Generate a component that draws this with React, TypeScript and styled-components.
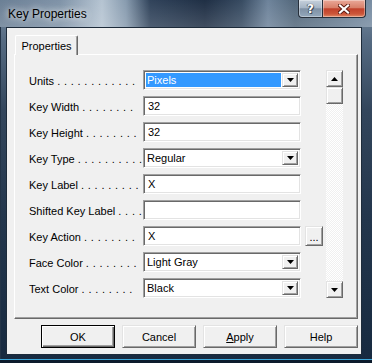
import React from "react";
import styled, { createGlobalStyle, css } from "styled-components";

const GlobalStyle = createGlobalStyle`
  html, body {
    margin: 0;
    padding: 0;
    background: #ffffff;
  }
  body {
    font-family: "Liberation Sans", Arial, sans-serif;
    color: #000;
  }
`;

type Field = {
  label: string;
  dots: number;
  kind: "edit" | "combo";
  value: string;
  focused?: boolean;
  browse?: boolean;
};

const fields: Field[] = [
  { label: "Units", dots: 12, kind: "combo", value: "Pixels", focused: true },
  { label: "Key Width", dots: 8, kind: "edit", value: "32" },
  { label: "Key Height", dots: 8, kind: "edit", value: "32" },
  { label: "Key Type", dots: 10, kind: "combo", value: "Regular" },
  { label: "Key Label", dots: 9, kind: "edit", value: "X" },
  { label: "Shifted Key Label", dots: 4, kind: "edit", value: "" },
  { label: "Key Action", dots: 8, kind: "edit", value: "X", browse: true },
  { label: "Face Color", dots: 8, kind: "combo", value: "Light Gray" },
  { label: "Text Color", dots: 8, kind: "combo", value: "Black" },
];

const raised = css`
  box-sizing: border-box;
  border: 1px solid;
  border-color: #e3e3e3 #696969 #696969 #e3e3e3;
  box-shadow: inset 1px 1px 0 #ffffff, inset -1px -1px 0 #a0a0a0;
  background: #f0f0f0;
`;

const sunken = css`
  box-sizing: border-box;
  border: 1px solid;
  border-color: #a0a0a0 #ffffff #ffffff #a0a0a0;
  box-shadow: inset 1px 1px 0 #696969, inset -1px -1px 0 #e3e3e3;
  background: #ffffff;
`;

const Arrow = ({ up }: { up?: boolean }) => (
  <svg width="7" height="4" viewBox="0 0 7 4">
    <polygon points={up ? "3.5,0 7,4 0,4" : "0,0 7,0 3.5,4"} fill="#000" />
  </svg>
);

const CloseGlyph = () => (
  <svg width="12" height="10" viewBox="0 0 12 10">
    <path d="M2 1.5 L10 8.5 M10 1.5 L2 8.5" stroke="#5a1a10" strokeWidth="4" strokeLinecap="square" />
    <path d="M2 1.5 L10 8.5 M10 1.5 L2 8.5" stroke="#ffffff" strokeWidth="2.2" strokeLinecap="square" />
  </svg>
);

const App = () => {
  return (
    <>
      <GlobalStyle />
      <Window>
        <TitleBar>
          <Title>Key Properties</Title>
          <Captions>
            <Caption $variant="help">
              <HelpMark>?</HelpMark>
            </Caption>
            <Caption $variant="close">
              <CloseGlyph />
            </Caption>
          </Captions>
        </TitleBar>
        <Client>
          <Sheet>
            <TabStrip>
              <Tab>Properties</Tab>
            </TabStrip>
            <Panel>
              <ScrollArea>
                <Form>
                  {fields.map((f) => (
                    <Row key={f.label}>
                      <Label>
                        {f.label} <Leader>{Array(f.dots).fill(".").join(" ")}</Leader>
                      </Label>
                      {f.kind === "edit" ? (
                        <Edit>{f.value}</Edit>
                      ) : (
                        <Combo>
                          <ComboValue $focused={f.focused}>{f.value}</ComboValue>
                          <DropButton>
                            <Arrow />
                          </DropButton>
                        </Combo>
                      )}
                      {f.browse && <BrowseButton>...</BrowseButton>}
                    </Row>
                  ))}
                </Form>
                <ScrollBar>
                  <ScrollButton>
                    <Arrow up />
                  </ScrollButton>
                  <Thumb />
                  <Track />
                  <ScrollButton>
                    <Arrow />
                  </ScrollButton>
                </ScrollBar>
              </ScrollArea>
            </Panel>
            <ButtonRow>
              <PushButton $default>OK</PushButton>
              <PushButton>Cancel</PushButton>
              <PushButton>
                <u>A</u>pply
              </PushButton>
              <PushButton>Help</PushButton>
            </ButtonRow>
          </Sheet>
        </Client>
      </Window>
    </>
  );
};

export default App;

const Window = styled.div`
  width: 372px;
  height: 363px;
  display: flex;
  flex-direction: column;
  background: linear-gradient(180deg, #7a8ea3 0, #566b82 40px, #33465c 110px, #23364c 220px, #172a40 100%);
  box-shadow: inset 0 -3px 0 #0c1b2c, inset 0 -4px 0 #3ea8da, inset 1px 0 0 #233447;
`;

const TitleBar = styled.div`
  height: 27px;
  display: flex;
  align-items: flex-start;
  background:
    linear-gradient(180deg, rgba(255, 255, 255, 0.02) 0, rgba(255, 255, 255, 0.16) 100%),
    linear-gradient(90deg, #687d93 0, #7d91a6 60px, #b4c3d1 102px, #8599ad 126px, #2d4058 150px, #1b2b41 205px, #34485f 242px, #6b8199 268px, #506579 295px, #768ba1 372px);
`;

const Title = styled.div`
  padding: 7px 0 0 8px;
  font-size: 12px;
  line-height: 14px;
  color: #000;
  text-shadow: 0 0 6px rgba(255, 255, 255, 0.85), 0 0 10px rgba(255, 255, 255, 0.5);
`;

const Captions = styled.div`
  margin-left: auto;
  margin-right: 6px;
  display: flex;
`;

const Caption = styled.div<{ $variant: "help" | "close" }>`
  height: 18px;
  box-sizing: border-box;
  display: flex;
  align-items: center;
  justify-content: center;
  border: 1px solid #27303b;
  border-top: none;
  box-shadow: inset 0 0 0 1px rgba(255, 255, 255, 0.35);
  ${(p) =>
    p.$variant === "help"
      ? css`
          width: 24px;
          border-right: none;
          border-radius: 0 0 0 4px;
          background: linear-gradient(180deg, #c6d1dc 0, #a6b5c5 45%, #7f91a5 52%, #93a7bb 100%);
        `
      : css`
          width: 44px;
          border-radius: 0 0 4px 0;
          background: linear-gradient(180deg, #eaa999 0, #d8806a 45%, #c1412b 52%, #cc5639 82%, #e18b68 100%);
        `}
`;

const HelpMark = styled.span`
  font-family: "DejaVu Sans", sans-serif;
  font-weight: bold;
  font-size: 12px;
  line-height: 12px;
  color: #fff;
  text-shadow: 0 0 1px #1c2530, 1px 1px 0 rgba(20, 30, 45, 0.6), -1px 0 0 rgba(20, 30, 45, 0.5);
`;

const Client = styled.div`
  flex: 1;
  margin: 0 10px 8px 6px;
  border: 1px solid #1d2b3a;
  background: #f0f0f0;
`;

const Sheet = styled.div`
  width: 344px;
  margin: 7px 0 0 7px;
  display: flex;
  flex-direction: column;
`;

const TabStrip = styled.div`
  height: 19px;
  padding-left: 1px;
  display: flex;
`;

const Tab = styled.div`
  position: relative;
  z-index: 1;
  width: 63px;
  height: 20px;
  box-sizing: border-box;
  border: 1px solid;
  border-color: #ffffff #696969 transparent #ffffff;
  border-bottom: none;
  border-radius: 2px 2px 0 0;
  box-shadow: inset -1px 0 0 #a0a0a0;
  background: #f0f0f0;
  font-size: 11px;
  display: flex;
  align-items: center;
  justify-content: center;
`;

const Panel = styled.div`
  height: 265px;
  box-sizing: border-box;
  border: 1px solid;
  border-color: #ffffff #696969 #696969 #ffffff;
  box-shadow: inset -1px -1px 0 #a0a0a0;
  padding: 15px 13px 0 14px;
`;

const ScrollArea = styled.div`
  display: flex;
`;

const Form = styled.div`
  width: 297px;
  display: flex;
  flex-direction: column;
  gap: 6px;
`;

const Row = styled.div`
  height: 20px;
  display: flex;
  align-items: center;
`;

const Label = styled.div`
  width: 114px;
  padding-top: 1px;
  font-size: 11px;
  white-space: nowrap;
  overflow: hidden;
`;

const Leader = styled.span`
  letter-spacing: 0.35px;
`;

const Edit = styled.div`
  ${sunken};
  width: 158px;
  height: 20px;
  padding: 0 4px;
  font-size: 11px;
  line-height: 18px;
`;

const Combo = styled.div`
  ${sunken};
  width: 158px;
  height: 20px;
  padding: 1px 2px 2px 2px;
  display: flex;
  gap: 1px;
`;

const ComboValue = styled.div<{ $focused?: boolean }>`
  flex: 1;
  margin: 1px 0 0;
  padding-left: 1px;
  font-size: 11px;
  line-height: 15px;
  color: ${(p) => (p.$focused ? "#ffffff" : "#000000")};
  background: ${(p) => (p.$focused ? "#3399ff" : "transparent")};
`;

const DropButton = styled.div`
  ${raised};
  width: 16px;
  margin-top: 1px;
  display: flex;
  align-items: center;
  justify-content: center;
`;

const BrowseButton = styled.div`
  ${raised};
  width: 18px;
  height: 20px;
  margin-left: 4px;
  font-size: 11px;
  line-height: 20px;
  text-align: center;
`;

const ScrollBar = styled.div`
  width: 17px;
  display: flex;
  flex-direction: column;
`;

const ScrollButton = styled.div`
  ${raised};
  height: 17px;
  display: flex;
  align-items: center;
  justify-content: center;
`;

const Thumb = styled.div`
  ${raised};
  height: 17px;
`;

const Track = styled.div`
  flex: 1;
  background-color: #ffffff;
  background-image: repeating-conic-gradient(#f0f0f0 0 25%, #ffffff 0 50%);
  background-size: 2px 2px;
`;

const ButtonRow = styled.div`
  margin-top: 6px;
  display: flex;
  justify-content: flex-end;
  gap: 7px;
`;

const PushButton = styled.div<{ $default?: boolean }>`
  ${raised};
  width: 74px;
  height: 23px;
  font-size: 11px;
  display: flex;
  align-items: center;
  justify-content: center;
  ${(p) =>
    p.$default &&
    css`
      border-color: #000000;
      box-shadow: inset 1px 1px 0 #ffffff, inset -1px -1px 0 #696969, inset -2px -2px 0 #a0a0a0;
    `}
`;
